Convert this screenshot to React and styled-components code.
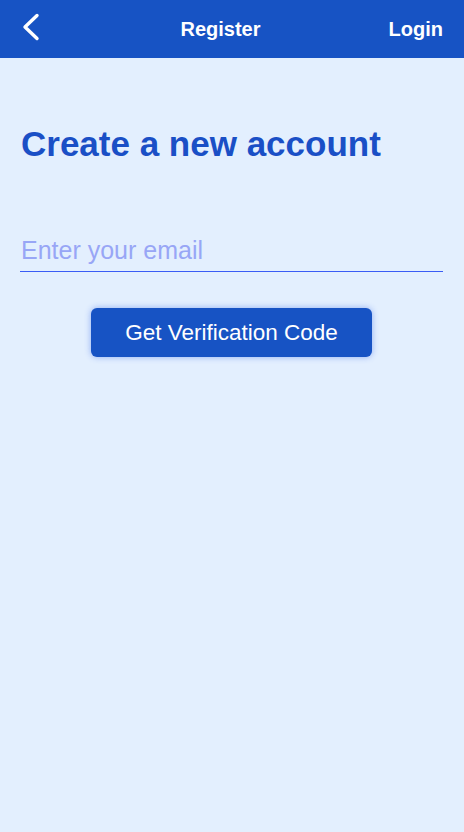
import styled, { createGlobalStyle } from 'styled-components'

const Global = createGlobalStyle`
	html, body {
		margin: 0;
		padding: 0;
		background: #e3effe;
	}
	body {
		font-family: 'Liberation Sans', Arial, sans-serif;
	}
`

const Page = styled.div`
	min-height: 832px;
	background: #e3effe;
	display: flex;
	flex-direction: column;
`

const TopBar = styled.header`
	height: 58px;
	background: #1753c4;
	display: grid;
	grid-template-columns: 1fr auto 1fr;
	align-items: center;
	padding: 0 21px 0 20px;
	color: #fff;
`

const BackButton = styled.button`
	background: none;
	border: none;
	padding: 0;
	display: flex;
	align-items: center;
	justify-self: start;
	cursor: pointer;
	margin-top: -4px;
`

const BarTitle = styled.h1`
	margin: 0;
	font-size: 20px;
	font-weight: 700;
	padding-right: 22px;
`

const BarLink = styled.a`
	justify-self: end;
	font-size: 20px;
	font-weight: 700;
	color: #fff;
	text-decoration: none;
`

const Body = styled.main`
	padding: 66px 21px 0 20px;
	display: flex;
	flex-direction: column;
`

const Heading = styled.h2`
	margin: 0 0 0 1px;
	font-size: 35px;
	font-weight: 700;
	color: #1a4fc6;
	line-height: 40px;
`

const EmailInput = styled.input`
	margin-top: 70px;
	border: none;
	border-bottom: 1px solid #3a5cf5;
	background: transparent;
	font-family: inherit;
	font-size: 25px;
	padding: 0 0 4px 1px;
	height: 38px;
	box-sizing: border-box;
	outline: none;
	color: #1a4fc6;

	&::placeholder {
		color: #98a6f6;
	}
`

const SubmitButton = styled.button`
	align-self: center;
	margin-top: 36px;
	width: 281px;
	height: 49px;
	border: none;
	border-radius: 6px;
	background: #1753c4;
	color: #fff;
	font-family: inherit;
	font-size: 22.5px;
	box-shadow: 0 0 6px rgba(40, 90, 230, 0.45);
	cursor: pointer;
`

function App() {
	return (
		<Page>
			<Global />
			<TopBar>
				<BackButton aria-label="Back">
					<svg width="20" height="28" viewBox="0 0 20 28" fill="none">
						<path d="M17 2.5 L5 14 L17 25.5" stroke="#fff" strokeWidth="3.4" strokeLinecap="round" strokeLinejoin="round" />
					</svg>
				</BackButton>
				<BarTitle>Register</BarTitle>
				<BarLink href="#">Login</BarLink>
			</TopBar>
			<Body>
				<Heading>Create a new account</Heading>
				<EmailInput type="email" placeholder="Enter your email" />
				<SubmitButton>Get Verification Code</SubmitButton>
			</Body>
		</Page>
	)
}

export default App
